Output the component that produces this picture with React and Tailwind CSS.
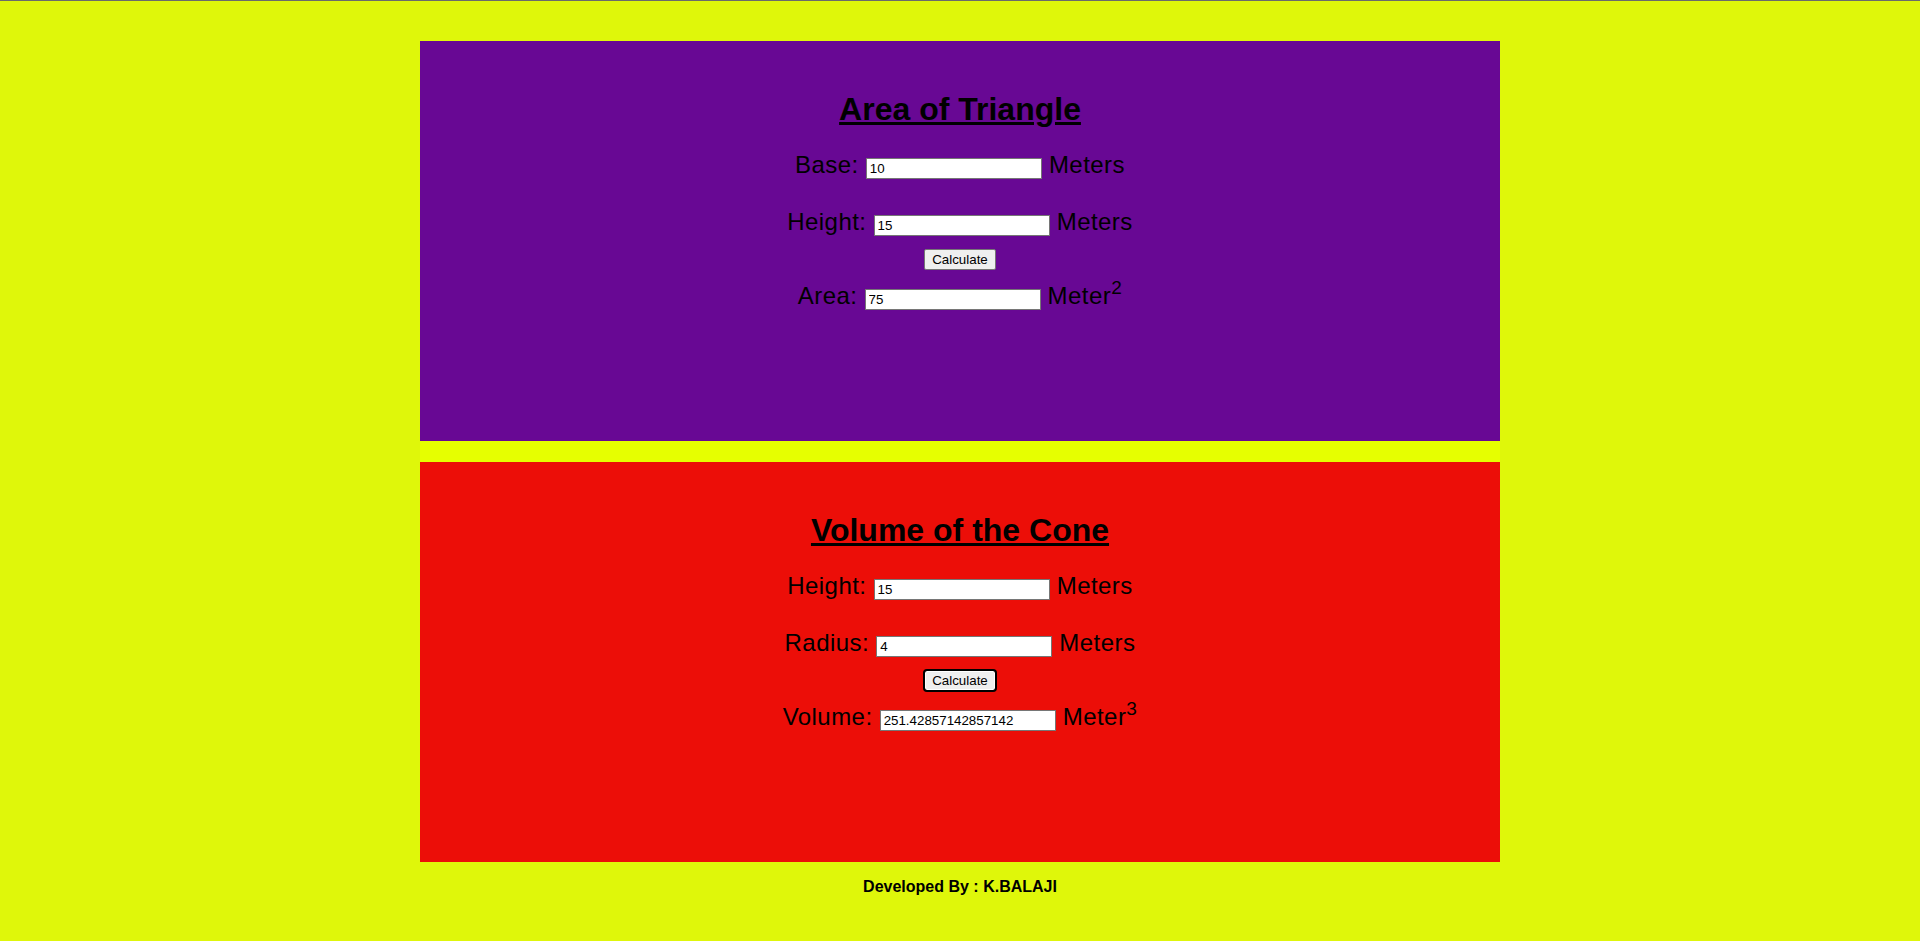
import React from "react";

const inputCls =
  "inline-block align-baseline w-[176px] h-[21px] border border-[#767676] bg-white pl-[3px] pr-[2px] text-[13.33px] leading-[15px] tracking-normal text-black outline-none font-['Liberation_Sans',Arial,sans-serif]";

const btnCls =
  "w-[72px] h-[21px] border border-[#767676] bg-[#efefef] rounded-[2px] text-[13.33px] leading-[15px] text-black font-['Liberation_Sans',Arial,sans-serif]";

function Box({ bg, title, rows, result, focused }) {
  return (
    <div className={`w-[1080px] h-[400px] pt-[50px] text-center text-black ${bg}`}>
      <h1 className="text-[32px] leading-[37px] font-bold underline">{title}</h1>
      <div className="text-[24px] leading-[28px] tracking-[0.45px] mt-[22.5px]">
        {rows[0].label} <input type="text" className={inputCls} defaultValue={rows[0].value} /> Meters
      </div>
      <div className="text-[24px] leading-[28px] tracking-[0.45px] mt-[29px]">
        {rows[1].label} <input type="text" className={inputCls} defaultValue={rows[1].value} /> Meters
      </div>
      <div className="mt-[13px] h-[21px] flex justify-center">
        <button
          type="button"
          className={
            focused
              ? "w-[72px] h-[21px] border border-[#767676] bg-[#efefef] rounded-[3px] text-[13.33px] leading-[15px] text-black font-['Liberation_Sans',Arial,sans-serif] outline-2 outline-solid outline-black outline-offset-[-1px] shadow-[inset_0_0_0_1px_white]"
              : btnCls
          }
        >
          Calculate
        </button>
      </div>
      <div className="text-[24px] leading-[28px] tracking-[0.45px] mt-[12px]">
        {result.label} <input type="text" className={inputCls} defaultValue={result.value} /> Meter
        <sup className="text-[19px] top-[-10px]">{result.sup}</sup>
      </div>
    </div>
  );
}

export default function App() {
  return (
    <div className="min-h-[941px] bg-[#dff70a] font-['Liberation_Sans',Arial,sans-serif] text-black">
      <div className="h-px bg-[#6b6b6b]" />
      <div className="pt-[40px] flex flex-col items-center">
        <div className="w-[1080px] bg-[#e6ff00] flex flex-col gap-[21px]">
          <Box
            bg="bg-[#680894]"
            title="Area of Triangle"
            rows={[
              { label: "Base:", value: "10" },
              { label: "Height:", value: "15" },
            ]}
            result={{ label: "Area:", value: "75", sup: "2" }}
          />
          <Box
            bg="bg-[#ec0e08]"
            title="Volume of the Cone"
            rows={[
              { label: "Height:", value: "15" },
              { label: "Radius:", value: "4" },
            ]}
            result={{ label: "Volume:", value: "251.42857142857142", sup: "3" }}
            focused
          />
        </div>
        <div className="mt-[16px] text-[16px] leading-[18px] font-bold text-center">
          Developed By : K.BALAJI
        </div>
      </div>
    </div>
  );
}
